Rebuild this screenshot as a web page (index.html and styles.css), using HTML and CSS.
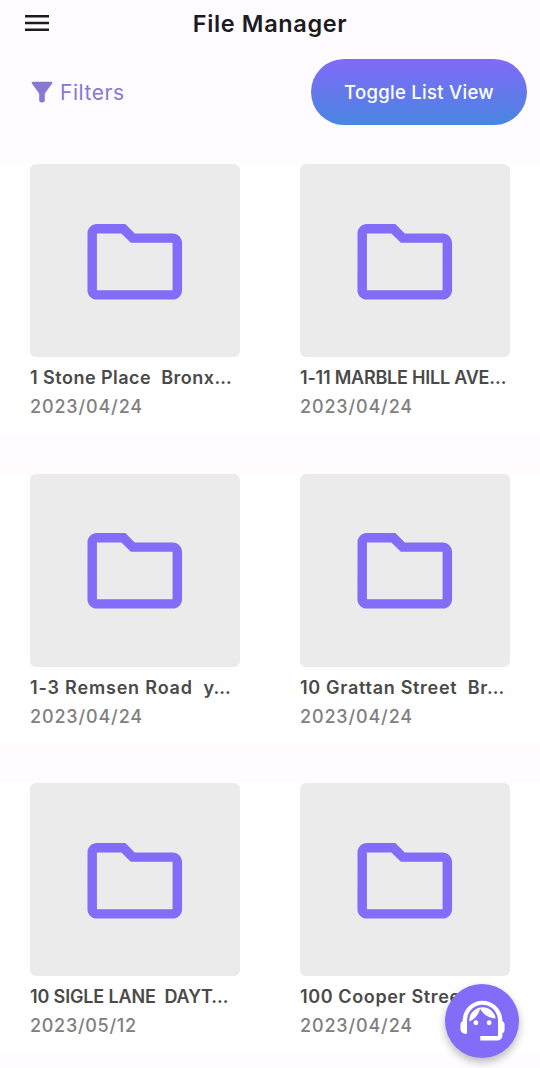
FILE: index.html
```html
<!DOCTYPE html>
<html lang="en">
<head>
<meta charset="utf-8">
<title>File Manager</title>
<link rel="stylesheet" href="styles.css">
</head>
<body>
<svg width="0" height="0" class="defs">
  <symbol id="folder" viewBox="0 0 24 24"><path d="M20 6h-8l-2-2H4c-1.1 0-1.99.9-1.99 2L2 18c0 1.1.9 2 2 2h16c1.1 0 2-.9 2-2V8c0-1.1-.9-2-2-2zm0 12H4V6h5.17l2 2H20v10z"/></symbol>
</svg>
<header class="appbar">
  <svg class="menu" viewBox="0 0 24 24"><path d="M3 18h18v-1.8H3V18zm0-5.1h18v-1.8H3v1.8zM3 6v1.8h18V6H3z"/></svg>
  <h1 class="title">File Manager</h1>
</header>
<div class="toolbar">
  <div class="filters">
    <svg class="funnel" viewBox="0 0 22 22"><path d="M1.6.8h18.8c.9 0 1.3 1 .7 1.7L14.4 11.7c-.4.5-.6 1-.6 1.7v6c0 1.1-1.2 2-2.8 2s-2.8-.9-2.8-2v-6c0-.7-.2-1.2-.6-1.7L.9 2.5C.3 1.8.7.8 1.6.8z"/></svg>
    <span class="filters-label">Filters</span>
  </div>
  <button class="toggle">Toggle List View</button>
</div>
<main class="grid">
  <section class="row">
    <article class="file"><div class="thumb"><svg class="folder"><use href="#folder"/></svg></div><div class="name n1">1 Stone Place  Bronx…</div><div class="date">2023/04/24</div></article>
    <article class="file"><div class="thumb"><svg class="folder"><use href="#folder"/></svg></div><div class="name n2">1-11 MARBLE HILL AVE…</div><div class="date">2023/04/24</div></article>
  </section>
  <section class="row">
    <article class="file"><div class="thumb"><svg class="folder"><use href="#folder"/></svg></div><div class="name n3">1-3 Remsen Road  y…</div><div class="date">2023/04/24</div></article>
    <article class="file"><div class="thumb"><svg class="folder"><use href="#folder"/></svg></div><div class="name n4">10 Grattan Street  Br…</div><div class="date">2023/04/24</div></article>
  </section>
  <section class="row">
    <article class="file"><div class="thumb"><svg class="folder"><use href="#folder"/></svg></div><div class="name n5">10 SIGLE LANE  DAYT…</div><div class="date d5">2023/05/12</div></article>
    <article class="file"><div class="thumb"><svg class="folder"><use href="#folder"/></svg></div><div class="name n6">100 Cooper Street…</div><div class="date">2023/04/24</div></article>
  </section>
</main>
<button class="support" aria-label="Support">
  <svg class="agent" viewBox="0 0 24 24"><path d="M21 12.22C21 6.73 16.74 3 12 3c-4.69 0-9 3.65-9 9.28-.6.34-1 .98-1 1.72v2c0 1.1.9 2 2 2h1v-6.1c0-3.87 3.13-7 7-7s7 3.13 7 7V19h-8v2h8c1.1 0 2-.9 2-2v-1.22c.59-.31 1-.92 1-1.64v-2.3c0-.7-.41-1.31-1-1.62z"/><circle cx="9" cy="13" r="1.1"/><circle cx="15" cy="13" r="1.1"/><path d="M18 11.03C17.52 8.18 15.04 6 12.05 6c-3.03 0-6.29 2.51-6.03 6.45 2.47-1.01 4.33-3.21 4.86-5.89 1.31 2.63 4 4.44 7.12 4.47z"/></svg>
</button>
</body>
</html>
```
FILE: styles.css
```css
* { box-sizing: border-box; }
body {
  margin: 0;
  width: 540px;
  height: 1068px;
  overflow: hidden;
  background: #fffbff;
  font-family: Inter, "Open Sans", sans-serif;
}
.defs { position: absolute; }
.appbar {
  height: 46px;
  display: grid;
  grid-template-columns: 74px 1fr 74px;
  align-items: center;
}
.menu { width: 32px; height: 32px; margin-left: 21px; fill: #1c1b1f; }
.title {
  margin: 0;
  padding-top: 1px;
  text-align: center;
  font-size: 23.5px;
  font-weight: 600;
  letter-spacing: 0.62px;
  color: #1c1b1f;
}
.toolbar {
  height: 118.4px;
  padding: 13px 13px 0 31px;
  display: flex;
  justify-content: space-between;
  align-items: flex-start;
}
.filters { height: 66px; display: flex; align-items: center; gap: 7px; color: #8878d2; }
.funnel { width: 22px; height: 22px; fill: currentColor; }
.filters-label { font-size: 21px; letter-spacing: 0.55px; }
.toggle {
  width: 216px;
  height: 66px;
  padding: 0;
  border: 0;
  border-radius: 33px;
  background: linear-gradient(#816af8, #4886e0);
  color: #fff;
  font: 500 18.5px Inter, sans-serif;
  letter-spacing: 0.3px;
}
.grid { display: flex; flex-direction: column; gap: 39.5px; }
.row {
  height: 270px;
  padding: 0 30px;
  display: grid;
  grid-template-columns: 210px 210px;
  gap: 60px;
  background: #fff;
}
.thumb {
  height: 193px;
  padding-top: 1px;
  display: flex;
  align-items: center;
  justify-content: center;
  border-radius: 6px;
  background: #ebebeb;
}
.folder { width: 113.5px; height: 113.5px; fill: #836cf8; }
.name, .date {
  font-size: 18px;
  line-height: 29px;
  font-weight: 600;
  white-space: pre;
}
.name { margin-top: 6px; color: #4a4a4a; }
.n1 { letter-spacing: 0.48px; }
.n2 { letter-spacing: -0.22px; }
.n3 { letter-spacing: 0.82px; }
.n4 { letter-spacing: 0.7px; }
.n5 { letter-spacing: -0.15px; }
.n6 { letter-spacing: 0.62px; }
.date { font-weight: 500; color: #808080; letter-spacing: 0.85px; }
.d5 { letter-spacing: 0.7px; }
.support {
  position: absolute;
  left: 445px;
  top: 984px;
  width: 74px;
  height: 74px;
  padding: 0 0 1px;
  border: 0;
  border-radius: 50%;
  display: flex;
  align-items: center;
  justify-content: center;
  background: #836cf8;
  box-shadow: 0 4px 8px rgba(0, 0, 0, 0.28);
}
.agent { width: 53px; height: 53px; fill: #fff; }
```
